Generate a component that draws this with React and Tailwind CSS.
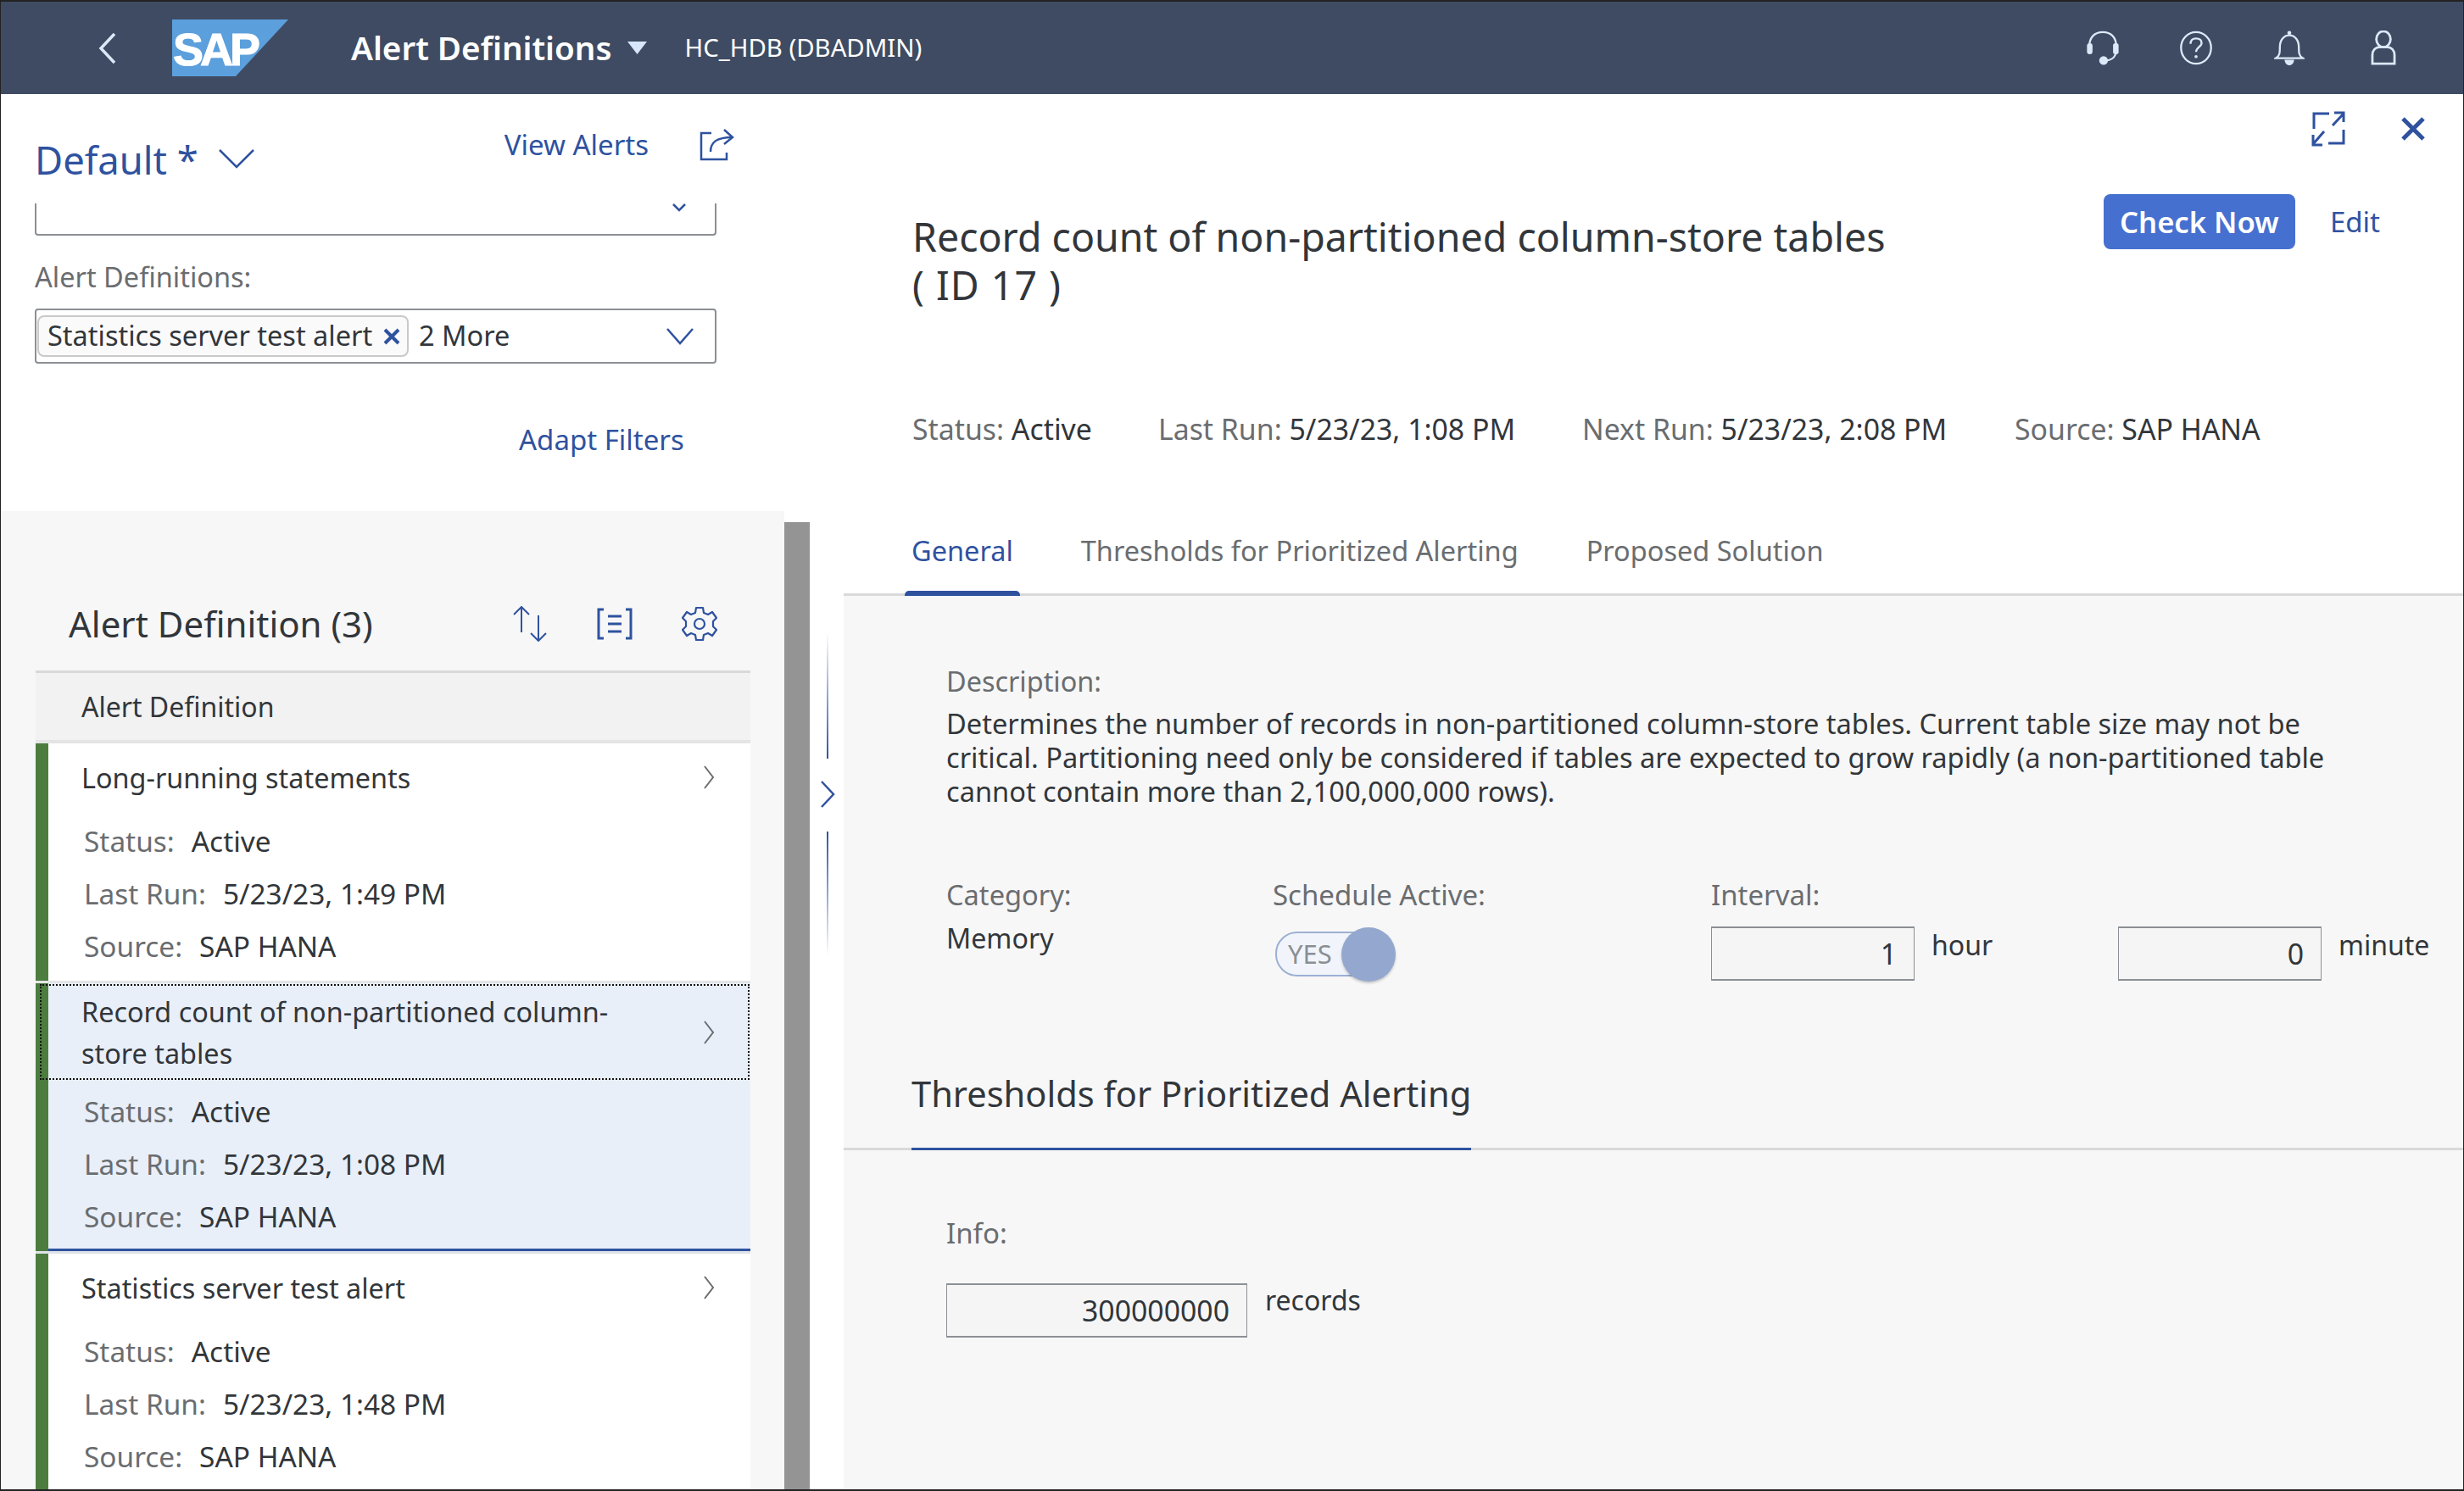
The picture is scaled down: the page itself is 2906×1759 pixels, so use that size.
const FONT = "font-['Noto_Sans',sans-serif]";

const alerts = [
  { title: ["Long-running statements"], lastRun: "5/23/23, 1:49 PM" },
  { title: ["Record count of non-partitioned column-", "store tables"], lastRun: "5/23/23, 1:08 PM", selected: true },
  { title: ["Statistics server test alert"], lastRun: "5/23/23, 1:48 PM" },
];

const tabs = ["General", "Thresholds for Prioritized Alerting", "Proposed Solution"];

function Icon({ w, h, vb, className, sw = 2.5, children }) {
  return (
    <svg width={w} height={h} viewBox={vb} fill="none" stroke="currentColor" strokeWidth={sw} className={className}>
      {children}
    </svg>
  );
}

function SapLogo() {
  return (
    <svg width="137" height="67" viewBox="0 0 137 67">
      <polygon points="0,0 137,0 75,67 0,67" fill="#5b9fdc" />
      <text x="1" y="54" fontFamily="Liberation Sans, sans-serif" fontWeight="700" fontSize="54" letterSpacing="-4" fill="#fff" stroke="#fff" strokeWidth="1">SAP</text>
    </svg>
  );
}

function ShellBar() {
  return (
    <header className="h-[109px] shrink-0 bg-[#3f4b62] flex items-center text-white">
      <Icon w="24" h="38" vb="0 0 24 38" className="ml-[114px] text-[#dbe8f8]" sw="3.5">
        <path d="M20 2 4 19l16 17" />
      </Icon>
      <div className="ml-[64px]"><SapLogo /></div>
      <span className="ml-[74px] text-[38.6px] font-semibold leading-none">Alert Definitions</span>
      <svg width="23" height="15" viewBox="0 0 23 15" className="ml-[19px]"><polygon points="0,0 23,0 11.5,15" fill="#d7e6f8" /></svg>
      <span className="ml-[44px] text-[29.3px] leading-none">HC_HDB (DBADMIN)</span>
      <div className="ml-auto mr-[78px] flex items-center text-[#dbe8f8]">
        <Icon w="40" h="41" vb="0 0 40 44">
          <path d="M3 20C3 8 10 2 20 2s17 6 17 18v4c0 9-4 13-13 14" />
          <rect x="0" y="16" width="7" height="14" rx="3.5" fill="currentColor" stroke="none" />
          <rect x="33" y="16" width="7" height="14" rx="3" fill="currentColor" stroke="none" />
          <circle cx="21" cy="38" r="5.5" fill="currentColor" stroke="none" />
        </Icon>
        <Icon w="40" h="41" vb="0 0 42 44" className="ml-[70px]">
          <ellipse cx="21" cy="22" rx="19" ry="20" />
          <path d="M14 17c0-5 3-7 7-7s7 2 7 6-7 6-7 11" />
          <circle cx="21" cy="33" r="2" fill="currentColor" stroke="none" />
        </Icon>
        <Icon w="36" h="41" vb="0 0 36 44" className="ml-[72px]">
          <path d="M1 35c5-3 5-7 5-14 0-9 5-15 12-15s12 6 12 15c0 7 0 11 5 14Z" />
          <circle cx="18" cy="3" r="2.5" fill="currentColor" stroke="none" />
          <path d="M12 37h12c0 4-3 7-6 7s-6-3-6-7Z" fill="currentColor" stroke="none" />
        </Icon>
        <Icon w="32" h="41" vb="0 0 32 44" sw="3" className="ml-[77px]">
          <ellipse cx="16" cy="11" rx="9" ry="10" />
          <path d="M2 42V31c0-6 4-10 9-10h10c5 0 9 4 9 10v11Z" />
        </Icon>
      </div>
    </header>
  );
}

function FilterBar() {
  return (
    <section className="h-[492px] shrink-0 bg-white pl-[40px] flex flex-col">
      <div className="h-[129px] w-[826px] flex items-start shrink-0">
        <span className="text-[45.4px] leading-none text-[#2f529f] mt-[55px]">Default *</span>
        <Icon w="42" h="24" vb="0 0 42 24" className="mt-[64px] ml-[24px] text-[#2f529f]"><path d="M1 2l20 20L41 2" /></Icon>
        <span className="ml-auto mt-[38px] text-[33px] leading-[44px] text-[#2f529f]">View Alerts</span>
        <Icon w="42" h="38" vb="0 0 42 38" className="ml-[60px] mt-[41px] text-[#2f529f]">
          <path d="M14 5H2v31h30v-8" /><path d="M13 27c0-12 8-17 25-17" /><path d="M29 1l10 9-10 8" />
        </Icon>
      </div>
      <div className="h-[38px] w-[804px] border-x-2 border-b-2 border-[#8c8f94] rounded-b-[4px] flex justify-end pr-[34px] shrink-0">
        <Icon w="16" h="10" vb="0 0 16 10" className="text-[#2f529f]"><path d="M1 1l7 7 7-7" /></Icon>
      </div>
      <span className="mt-[27px] text-[32.5px] leading-[44px] text-[#6a6d70]">Alert Definitions:</span>
      <div className="mt-[15px] h-[65px] w-[804px] border-2 border-[#8c8f94] rounded-[4px] flex items-center pl-[1px] pr-[25px] text-[#32363a]">
        <div className="h-[49px] w-[438px] border-2 border-[#c9c9cc] rounded-[8px] bg-[#fafafa] flex items-center pl-[10px] pr-[8px] justify-between">
          <span className="text-[32.5px] leading-none whitespace-nowrap">Statistics server test alert</span>
          <Icon w="20" h="20" vb="0 0 20 20" sw="4" className="text-[#2f529f]"><path d="M2 2l16 16M18 2 2 18" /></Icon>
        </div>
        <span className="ml-[12px] text-[32.5px] leading-none">2 More</span>
        <Icon w="32" h="22" vb="0 0 32 22" className="ml-auto text-[#2f529f]"><path d="M1 2l15 17L31 2" /></Icon>
      </div>
      <span className="mt-[68px] ml-[571px] text-[33px] leading-[44px] text-[#2f529f] whitespace-nowrap">Adapt Filters</span>
    </section>
  );
}

function Field({ label, value }) {
  return (
    <div className="h-[62px] flex items-center text-[33.4px] leading-none whitespace-nowrap">
      <span className="text-[#6a6d70]">{label}:</span>
      <span className="ml-[20px] text-[#32363a]">{value}</span>
    </div>
  );
}

function AlertRow({ alert }) {
  const sel = alert.selected;
  return (
    <div className={`flex border-b-[3px] ${sel ? "bg-[#e8eff9] border-[#dfe3e8]" : "bg-white border-[#e5e5e5]"}`}>
      <div className="w-[15px] shrink-0 bg-[#4c7d3f]" />
      <div className="flex-1 min-w-0">
        <div className={`flex items-center text-[32.4px] leading-[49px] text-[#32363a] ${sel ? "h-[115px] outline-dotted outline-2 outline-offset-[-3px] outline-[#111] -ml-[11px] pl-[50px] pr-[42px]" : "h-[80px] pl-[39px] pr-[42px]"}`}>
          <div className="flex-1 whitespace-nowrap">
            {alert.title.map((t) => <div key={t}>{t}</div>)}
          </div>
          <Icon w="14" h="28" vb="0 0 14 28" sw="2" className="text-[#6a6d70]"><path d="M2 1l10 13L2 27" /></Icon>
        </div>
        <div className={`pl-[42px] ${sel ? "pt-[6px] pb-[6px] border-b-[3px] border-[#2f529f]" : "pt-[5px] pb-[9px]"}`}>
          <Field label="Status" value="Active" />
          <Field label="Last Run" value={alert.lastRun} />
          <Field label="Source" value="SAP HANA" />
        </div>
      </div>
    </div>
  );
}

function AlertList() {
  return (
    <section className="flex-1 min-h-0 flex">
      <div className="w-[925px] bg-[#f7f7f7] pl-[41px] pr-[40px] overflow-hidden">
        <div className="h-[188px] flex items-center pl-[39px] pt-[78px] pr-[39px] text-[#2f529f]">
          <span className="text-[42px] leading-none text-[#32363a] mr-auto">Alert Definition (3)</span>
          <Icon w="42" h="42" vb="0 0 42 42" sw="2">
            <path d="M11 31V1M2 10l9-9 9 9M31 11v30M22 32l9 9 9-9" />
          </Icon>
          <Icon w="42" h="42" vb="0 0 42 42" className="ml-[58px]" sw="3">
            <path d="M8 4H2v34h6M34 4h6v34h-6M13 12h16M13 21h16M13 30h16" />
          </Icon>
          <Icon w="42" h="42" vb="0 0 42 42" className="ml-[58px]" sw="2.2">
            <circle cx="21" cy="21" r="6" />
            <path d="M17 2h8l1 6 5 2 5-3 5 7-4 4v6l4 4-5 7-5-3-5 2-1 6h-8l-1-6-5-2-5 3-5-7 4-4v-6l-4-4 5-7 5 3 5-2Z" strokeLinejoin="round" />
          </Icon>
        </div>
        <div className="h-[86px] bg-[#f2f2f2] border-t-[3px] border-b-[4px] border-t-[#d9d9d9] border-b-[#e5e5e5] flex items-center pl-[54px] text-[32px] text-[#32363a]">
          Alert Definition
        </div>
        {alerts.map((a) => <AlertRow key={a.title[0]} alert={a} />)}
      </div>
      <div className="w-[30px] mt-[13px] bg-[#949494]" />
    </section>
  );
}

function Splitter() {
  return (
    <div className="w-[40px] shrink-0 bg-white flex flex-col items-center pt-[635px] pl-[2px]">
      <div className="w-[2px] h-[149px] bg-gradient-to-b from-[#ffffff] to-[#2f529f]" />
      <Icon w="18" h="32" vb="0 0 18 32" className="mt-[26px] text-[#2f529f]" sw="2.5"><path d="M2 1l14 15L2 31" /></Icon>
      <div className="mt-[28px] w-[2px] h-[147px] bg-gradient-to-b from-[#2f529f] to-[#ffffff]" />
    </div>
  );
}

function MetaItem({ label, value, className }) {
  return (
    <div className={`text-[33.8px] leading-none whitespace-nowrap ${className}`}>
      <span className="text-[#6a6d70]">{label}: </span>
      <span className="text-[#32363a]">{value}</span>
    </div>
  );
}

function ValueInput({ value, className }) {
  return (
    <div className={`h-[64px] border-2 border-x border-[#8c8f94] bg-[#f5f5f5] flex items-center justify-end pr-[20px] pt-[2px] text-[33.8px] leading-none text-[#32363a] ${className}`}>
      {value}
    </div>
  );
}

function Detail() {
  return (
    <section className="flex-1 min-w-0 flex flex-col">
      <div className="h-[592px] shrink-0 bg-white flex flex-col">
        <div className="flex justify-end pt-[20px] pr-[45px] h-[118px] shrink-0 text-[#2f529f]">
          <Icon w="40" h="42" vb="0 0 40 42" sw="3">
            <path d="M21 3h-18v18M38 22v16H20M25 17 38 3M27 2h11v11M15 24 2 39M2 28v12h11" />
          </Icon>
          <Icon w="28" h="28" vb="0 0 28 28" sw="5" className="ml-[66px] mt-[7px]"><path d="M2 2l24 24M26 2 2 26" /></Icon>
        </div>
        <div className="flex items-start pl-[81px] pr-[98px]">
          <h1 className="mt-[22px] text-[46.5px] leading-[57px] text-[#32363a] font-normal whitespace-nowrap">
            Record count of non-partitioned column-store tables<br />
            <span className="tracking-[1px]">( ID 17 )</span>
          </h1>
          <div className="ml-auto flex items-center h-[65px]">
            <button className="h-[65px] w-[226px] rounded-[8px] bg-[#4670d0] text-white text-[34.6px] font-semibold">Check Now</button>
            <span className="ml-[41px] text-[33px] text-[#2f529f]">Edit</span>
          </div>
        </div>
        <div className="flex pl-[81px] mt-[125px]">
          <MetaItem label="Status" value="Active" className="w-[290px]" />
          <MetaItem label="Last Run" value="5/23/23, 1:08 PM" className="w-[500px]" />
          <MetaItem label="Next Run" value="5/23/23, 2:08 PM" className="w-[510px]" />
          <MetaItem label="Source" value="SAP HANA" />
        </div>
        <div className="mt-auto flex pl-[72px] border-b-[3px] border-[#d9d9d9] h-[86px]">
          {tabs.map((t, i) => (
            <div key={t} className={`flex flex-col px-[8px] mr-[64px] pt-[11px] -mb-[3px] text-[32.5px] leading-[44px] whitespace-nowrap ${i === 0 ? "text-[#2f529f]" : "text-[#6a6d70]"}`}>
              {t}
              {i === 0 && <div className="mt-auto -mx-[8px] h-[6px] rounded-t-[5px] bg-[#2f529f]" />}
            </div>
          ))}
        </div>
      </div>
      <div className="flex-1 bg-[#f7f7f7] text-[#32363a]">
        <div className="pl-[121px] pt-[78px]">
          <div className="text-[32.4px] leading-[44px] text-[#6a6d70]">Description:</div>
          <p className="mt-[9px] text-[32.6px] leading-[40px] whitespace-nowrap">
            Determines the number of records in non-partitioned column-store tables. Current table size may not be<br />
            critical. Partitioning need only be considered if tables are expected to grow rapidly (a non-partitioned table<br />
            cannot contain more than 2,100,000,000 rows).
          </p>
          <div className="mt-[80px] flex">
            <div className="w-[385px] shrink-0">
              <div className="text-[32.6px] leading-[44px] text-[#6a6d70]">Category:</div>
              <div className="mt-[7px] text-[32.2px] leading-[44px]">Memory</div>
            </div>
            <div className="w-[517px] shrink-0">
              <div className="text-[33px] leading-[44px] text-[#6a6d70]">Schedule Active:</div>
              <div className="mt-[15px] ml-[3px] h-[65px] flex items-center">
                <div className="h-[53px] w-[120px] rounded-l-[26px] border-2 border-[#9db0d2] bg-[#f1f5fb] flex items-center pl-[13px] text-[31px] text-[#8b8f94]">YES</div>
                <div className="-ml-[42px] size-[64px] rounded-full bg-[#94a8cf] shadow-[0_2px_3px_rgba(0,0,0,0.2)]" />
              </div>
            </div>
            <div className="shrink-0">
              <div className="text-[33px] leading-[44px] text-[#6a6d70]">Interval:</div>
              <div className="mt-[15px] flex items-start">
                <ValueInput value="1" className="w-[240px]" />
                <span className="ml-[20px] w-[220px] text-[32px] leading-[44px]">hour</span>
                <ValueInput value="0" className="w-[240px]" />
                <span className="ml-[20px] text-[32px] leading-[44px]">minute</span>
              </div>
            </div>
          </div>
        </div>
        <div className="mt-[102px] border-b-[3px] border-[#d9d9d9] pl-[80px]">
          <div className="w-fit h-[97px] border-b-[3px] -mb-[3px] border-[#2f529f] text-[41.6px] leading-[60px] whitespace-nowrap">Thresholds for Prioritized Alerting</div>
        </div>
        <div className="pl-[121px] pt-[76px]">
          <div className="text-[33px] leading-[44px] text-[#6a6d70]">Info:</div>
          <div className="mt-[37px] flex items-start">
            <ValueInput value="300000000" className="w-[355px]" />
            <span className="ml-[21px] text-[32px] leading-[40px]">records</span>
          </div>
        </div>
      </div>
    </section>
  );
}

export default function App() {
  return (
    <div className={`w-[2906px] h-[1759px] overflow-hidden border-t-2 border-x border-b-2 border-[#222] flex flex-col bg-white ${FONT}`}>
      <ShellBar />
      <main className="flex-1 min-h-0 flex">
        <aside className="w-[954px] shrink-0 flex flex-col">
          <FilterBar />
          <AlertList />
        </aside>
        <Splitter />
        <Detail />
      </main>
    </div>
  );
}
